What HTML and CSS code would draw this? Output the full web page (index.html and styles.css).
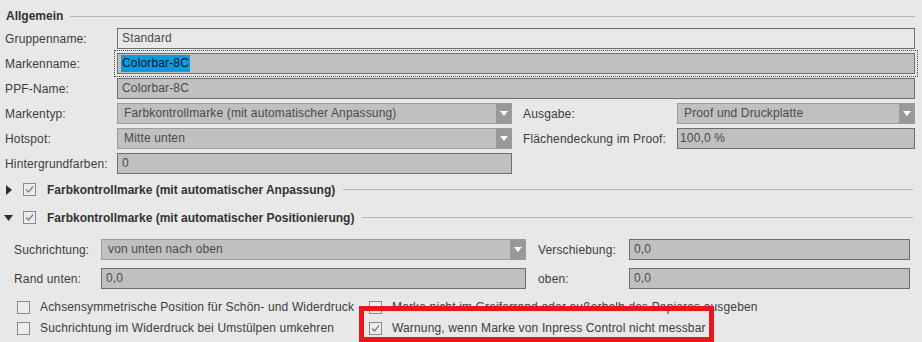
FILE: index.html
```html
<!DOCTYPE html>
<html lang="de">

<head>
    <meta charset="UTF-8">
    <meta name="viewport" content="width=device-width, initial-scale=1.0">
    <title>Marke bearbeiten</title>
    <link rel="stylesheet" href="styles.css">
</head>

<body>
    <div class="panel">
        <div class="titled">
            <span class="title">Allgemein</span>
            <span class="rule"></span>
        </div>

        <div class="form">
            <label class="lbl">Gruppenname:</label>
            <div class="field edit wide">Standard</div>

            <label class="lbl">Markenname:</label>
            <div class="field wide focused"><span class="sel">Colorbar-8C</span></div>

            <label class="lbl">PPF-Name:</label>
            <div class="field wide">Colorbar-8C</div>

            <label class="lbl">Markentyp:</label>
            <div class="combo"><span class="combo-text">Farbkontrollmarke (mit automatischer Anpassung)</span><span class="arrow"><svg width="8" height="5" viewBox="0 0 8 5"><polygon points="0,0 8,0 4,5" fill="#fff"/></svg></span></div>
            <label class="lbl lbl-right">Ausgabe:</label>
            <div class="combo"><span class="combo-text">Proof und Druckplatte</span><span class="arrow"><svg width="8" height="5" viewBox="0 0 8 5"><polygon points="0,0 8,0 4,5" fill="#fff"/></svg></span></div>

            <label class="lbl">Hotspot:</label>
            <div class="combo"><span class="combo-text">Mitte unten</span><span class="arrow"><svg width="8" height="5" viewBox="0 0 8 5"><polygon points="0,0 8,0 4,5" fill="#fff"/></svg></span></div>
            <label class="lbl lbl-right">Flächendeckung im Proof:</label>
            <div class="field tight">100,0 %</div>

            <label class="lbl">Hintergrundfarben:</label>
            <div class="field">0</div>
        </div>

        <div class="toggle first">
            <svg class="tri" width="6" height="10" viewBox="0 0 6 10"><polygon points="0,0 6,5 0,10" fill="#2e2e2e"/></svg>
            <span class="box checked"><svg width="11" height="11" viewBox="0 0 11 11"><polyline points="2,5.5 4.5,8 9,2.5" fill="none" stroke="#7a7a7a" stroke-width="1.2"/></svg></span>
            <span class="toggle-text">Farbkontrollmarke (mit automatischer Anpassung)</span>
            <span class="rule"></span>
        </div>

        <div class="toggle">
            <svg class="tri down" width="9" height="6" viewBox="0 0 9 6"><polygon points="0,0 9,0 4.5,6" fill="#2e2e2e"/></svg>
            <span class="box checked"><svg width="11" height="11" viewBox="0 0 11 11"><polyline points="2,5.5 4.5,8 9,2.5" fill="none" stroke="#7a7a7a" stroke-width="1.2"/></svg></span>
            <span class="toggle-text">Farbkontrollmarke (mit automatischer Positionierung)</span>
            <span class="rule"></span>
        </div>

        <div class="sub-form">
            <label class="lbl">Suchrichtung:</label>
            <div class="combo"><span class="combo-text">von unten nach oben</span><span class="arrow"><svg width="8" height="5" viewBox="0 0 8 5"><polygon points="0,0 8,0 4,5" fill="#fff"/></svg></span></div>
            <label class="lbl lbl-right">Verschiebung:</label>
            <div class="field">0,0</div>

            <label class="lbl">Rand unten:</label>
            <div class="field">0,0</div>
            <label class="lbl lbl-right">oben:</label>
            <div class="field">0,0</div>
        </div>

        <div class="checks">
            <div class="check"><span class="box"></span>Achsensymmetrische Position für Schön- und Widerdruck</div>
            <div class="check"><span class="box"></span>Marke nicht im Greiferrand oder außerhalb des Papieres ausgeben</div>
            <div class="check"><span class="box"></span>Suchrichtung im Widerdruck bei Umstülpen umkehren</div>
            <div class="check"><span class="box checked"><svg width="11" height="11" viewBox="0 0 11 11"><polyline points="2,5.5 4.5,8 9,2.5" fill="none" stroke="#7a7a7a" stroke-width="1.2"/></svg></span>Warnung, wenn Marke von Inpress Control nicht messbar</div>
        </div>

        <div class="highlight"></div>
    </div>
</body>

</html>
```

FILE: styles.css
```css
* {
    box-sizing: border-box;
}

body {
    margin: 0;
    background-color: #e8e8e8;
    font-family: 'Liberation Sans', Arial, sans-serif;
    font-size: 12px;
    letter-spacing: 0.15px;
    color: #3c3c3c;
}

.panel {
    position: relative;
    width: 922px;
    height: 342px;
    overflow: hidden;
}

.titled {
    display: flex;
    align-items: center;
    height: 28px;
    padding: 4px 7px 0 6px;
}

.title {
    font-weight: bold;
    letter-spacing: 0;
    color: #333;
}

.rule {
    flex: 1;
    margin-left: 7px;
    border-top: 1px solid #b4b4b4;
}

.form {
    display: grid;
    grid-template-columns: 117px 395px 165px 238px;
    grid-auto-rows: 21px;
    row-gap: 4px;
}

.lbl {
    display: flex;
    align-items: center;
    padding-left: 5px;
    white-space: nowrap;
}

.lbl-right {
    padding-left: 11px;
}

.field {
    height: 21px;
    padding-left: 4px;
    line-height: 19px;
    border: 1px solid #6e6e6e;
    background-color: #c0c0c0;
    color: #4a4a4a;
    white-space: nowrap;
}

.field.edit {
    background-color: #e8e8e8;
}

.field.wide {
    grid-column: 2 / 5;
}

.field.tight {
    padding-left: 2px;
}

.field.focused {
    padding-left: 3px;
    outline: 1px dotted #444;
    outline-offset: 2px;
}

.sel {
    display: inline-block;
    padding: 0 1px;
    line-height: 17px;
    vertical-align: top;
    margin-top: 1px;
    background-color: #0a9be0;
    color: #111;
}

.combo {
    display: flex;
    height: 21px;
    border: 1px solid #9c9c9c;
    background-color: #c0c0c0;
    color: #4a4a4a;
}

.combo-text {
    flex: 1;
    padding-left: 6px;
    line-height: 19px;
    white-space: nowrap;
}

.arrow {
    display: flex;
    align-items: center;
    justify-content: center;
    width: 15px;
    background-color: #999;
}

.toggle {
    display: flex;
    align-items: center;
    height: 17px;
    margin-top: 11px;
    padding-right: 9px;
}

.toggle.first {
    margin-top: 7px;
}

.tri {
    margin-left: 6px;
}

.tri.down {
    margin-left: 4px;
}

.toggle .box {
    margin-left: 11px;
}

.toggle .tri.down + .box {
    margin-left: 10px;
}

.toggle-text {
    margin-left: 11px;
    font-weight: bold;
    letter-spacing: 0;
    color: #333;
    white-space: nowrap;
}

.toggle .rule {
    margin-left: 8px;
}

.box {
    display: inline-flex;
    align-items: center;
    justify-content: center;
    width: 13px;
    height: 13px;
    border: 1px solid #8a8a8a;
    background-color: #ececec;
    flex-shrink: 0;
}

.sub-form {
    display: grid;
    grid-template-columns: 87px 425px 103px 281px;
    grid-auto-rows: 21px;
    row-gap: 8px;
    margin-top: 13px;
    padding-left: 14px;
}

.sub-form .lbl {
    padding-left: 0;
}

.sub-form .lbl-right {
    padding-left: 12px;
}

.checks {
    display: grid;
    grid-template-columns: 352px auto;
    grid-auto-rows: 20px;
    row-gap: 1px;
    margin-top: 8px;
    padding-left: 17px;
}

.check {
    display: flex;
    align-items: center;
    white-space: nowrap;
}

.check .box {
    margin-right: 10px;
}

.highlight {
    position: absolute;
    left: 359px;
    top: 306px;
    width: 355px;
    height: 36px;
    border: 5px solid #e8161f;
}
```
